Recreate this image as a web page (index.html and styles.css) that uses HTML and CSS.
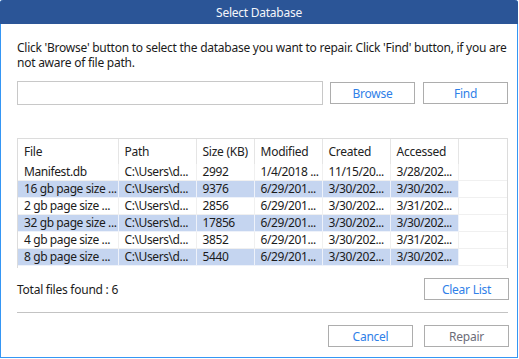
FILE: index.html
```html
<!DOCTYPE html>
<html lang="en">
<head>
  <meta charset="UTF-8" />
  <title>Select Database</title>
  <link rel="stylesheet" href="styles.css">
</head>
<body>
  <div class="dialog">
    <div class="titlebar">Select Database</div>
    <div class="content">
      <p class="intro">Click 'Browse' button to select the database you want to repair. Click 'Find' button, if you are not aware of file path.</p>

      <div class="path-row">
        <input type="text" class="path-input" />
        <button class="btn">Browse</button>
        <button class="btn">Find</button>
      </div>

      <div class="list-box">
        <table class="file-list">
          <thead>
            <tr>
              <th class="c-file">File</th>
              <th class="c-path">Path</th>
              <th class="c-size">Size (KB)</th>
              <th class="c-date">Modified</th>
              <th class="c-date">Created</th>
              <th class="c-date">Accessed</th>
              <th class="c-fill"></th>
            </tr>
          </thead>
          <tbody>
            <tr>
              <td>Manifest.db</td><td>C:\Users\d...</td><td>2992</td><td>1/4/2018 ...</td><td>11/15/20...</td><td>3/28/202...</td><td class="c-fill"></td>
            </tr>
            <tr class="alt">
              <td>16 gb page size ...</td><td>C:\Users\d...</td><td>9376</td><td>6/29/201...</td><td>3/30/202...</td><td>3/30/202...</td><td class="c-fill"></td>
            </tr>
            <tr>
              <td>2 gb page size ...</td><td>C:\Users\d...</td><td>2856</td><td>6/29/201...</td><td>3/30/202...</td><td>3/31/202...</td><td class="c-fill"></td>
            </tr>
            <tr class="alt">
              <td>32 gb page size ...</td><td>C:\Users\d...</td><td>17856</td><td>6/29/201...</td><td>3/30/202...</td><td>3/30/202...</td><td class="c-fill"></td>
            </tr>
            <tr>
              <td>4 gb page size ...</td><td>C:\Users\d...</td><td>3852</td><td>6/29/201...</td><td>3/30/202...</td><td>3/31/202...</td><td class="c-fill"></td>
            </tr>
            <tr class="alt">
              <td>8 gb page size ...</td><td>C:\Users\d...</td><td>5440</td><td>6/29/201...</td><td>3/30/202...</td><td>3/30/202...</td><td class="c-fill"></td>
            </tr>
          </tbody>
        </table>
      </div>

      <div class="total-row">
        <span class="total">Total files found : 6</span>
        <button class="btn">Clear List</button>
      </div>

      <hr class="divider" />

      <div class="actions">
        <button class="btn">Cancel</button>
        <button class="btn disabled">Repair</button>
      </div>
    </div>
  </div>
</body>
</html>
```

FILE: styles.css
```css
body {
  margin: 0;
  padding: 0;
  background: #fff;
  font-family: "Noto Sans", "Open Sans", sans-serif;
  font-size: 12px;
  letter-spacing: -0.25px;
  color: #1b1b1b;
}
.dialog {
  width: 516px;
  height: 357px;
  border: 1px solid #3596f4;
  border-top: none;
  border-radius: 3px 3px 0 0;
  background: #fff;
}
.titlebar {
  height: 24px;
  line-height: 26px;
  background: #2b5597;
  color: #f4f6fa;
  text-align: center;
  border-radius: 3px 3px 0 0;
  margin: 0 -1px;
}
.content {
  padding: 16px 8px 0 16px;
}
.intro {
  margin: 0;
  line-height: 15px;
}
.path-row {
  display: flex;
  align-items: center;
  margin-top: 11px;
}
.path-input {
  width: 306px;
  height: 24px;
  box-sizing: border-box;
  border: 1px solid #c8c8c8;
  margin: 0 7px 0 0;
  padding: 0;
}
.path-row .btn + .btn {
  margin-left: 8px;
}
.btn {
  width: 85px;
  height: 22px;
  box-sizing: border-box;
  border: 1px solid #adadad;
  background: #fff;
  color: #2f80e8;
  font-family: inherit;
  font-size: 12px;
  letter-spacing: inherit;
  padding: 0;
}
.btn.disabled {
  color: #6d6d7a;
}
.list-box {
  margin-top: 33px;
  width: 491px;
  height: 130px;
  box-sizing: border-box;
  border: 1px solid #dcdcdc;
  border-bottom: none;
}
.file-list {
  width: 100%;
  border-collapse: collapse;
  table-layout: fixed;
}
.file-list th {
  box-sizing: border-box;
  height: 25px;
  padding: 0 0 0 6px;
  text-align: left;
  font-weight: normal;
  color: #222;
  border-right: 1px solid #e5e5e5;
}
.file-list th.c-fill {
  border-right: none;
}
.c-file { width: 100px; }
.c-path { width: 78px; }
.c-size { width: 58px; }
.c-date { width: 68px; }
.file-list td {
  height: 16px;
  padding: 0 0 0 6px;
  line-height: 16px;
  letter-spacing: -0.4px;
  white-space: nowrap;
  overflow: hidden;
  border: 1px solid #f0f0f0;
  border-top: none;
}
.file-list td:first-child {
  border-left: none;
}
.file-list td.c-fill {
  border-right: none;
}
.file-list tr.alt td {
  background: #c5d5f0;
  border-color: #eef2fa;
}
.file-list tr.alt td.c-fill {
  background: #fff;
  border-color: #f0f0f0;
}
.total-row {
  display: flex;
  justify-content: space-between;
  align-items: center;
  width: 492px;
  margin-top: 10px;
}
.divider {
  width: 491px;
  margin: 12px 0 0 0;
  border: none;
  border-top: 1px solid #c3c3c3;
}
.actions {
  display: flex;
  justify-content: flex-end;
  gap: 11px;
  width: 492px;
  margin-top: 12px;
}
```
